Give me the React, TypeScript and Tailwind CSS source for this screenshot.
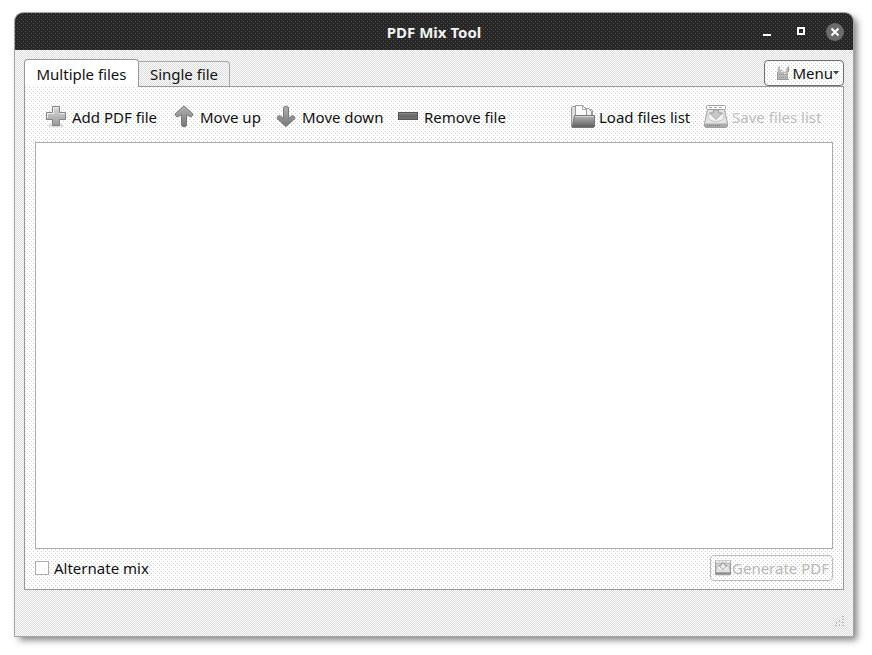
import type { ReactNode } from "react";
import { clsx } from "clsx";

const dots =
  "bg-white bg-[conic-gradient(at_1px_1px,transparent_75%,#d2d2d2_0),conic-gradient(at_1px_1px,transparent_75%,#d2d2d2_0)] bg-[length:4px_4px] bg-[position:0_0,2px_2px]";
const checker =
  "bg-[conic-gradient(#dcdcdc_25%,#fdfdfd_0_50%,#dcdcdc_0_75%,#fdfdfd_0)] bg-[length:2px_2px]";
const titleDots =
  "bg-[#262626] bg-[conic-gradient(at_1px_1px,transparent_75%,#555_0),conic-gradient(at_1px_1px,transparent_75%,#555_0)] bg-[length:4px_4px] bg-[position:0_0,2px_2px]";

function Gradients() {
  return (
    <svg className="absolute size-0" aria-hidden="true">
      <defs>
        <linearGradient id="metal" x1="0" y1="0" x2="0" y2="1">
          <stop offset="0" stopColor="#dcdcdc" />
          <stop offset="1" stopColor="#989898" />
        </linearGradient>
        <linearGradient id="arrow" x1="0" y1="0" x2="0" y2="1">
          <stop offset="0" stopColor="#b2b2b2" />
          <stop offset="1" stopColor="#777" />
        </linearGradient>
        <linearGradient id="folder" x1="0" y1="0" x2="0" y2="1">
          <stop offset="0" stopColor="#b8b8b8" />
          <stop offset="1" stopColor="#5c5c5c" />
        </linearGradient>
      </defs>
    </svg>
  );
}

function PlusIcon() {
  return (
    <svg viewBox="0 0 24 24" className="size-6 shrink-0" aria-hidden="true">
      <ellipse cx="12" cy="20.5" rx="8" ry="2" fill="#ddd" />
      <path
        d="M8.5 1.500h7v6h6v7h-6v6h-7v-6h-6v-7h6z"
        fill="url(#metal)"
        stroke="#858585"
        strokeLinejoin="round"
      />
      <path d="M9.5 8.500V2.500h5M3.500 13V8.500h6M15.500 8.500h5" fill="none" stroke="#ececec" />
    </svg>
  );
}

function ArrowIcon({ down }: { down?: boolean }) {
  return (
    <svg viewBox="0 0 24 24" className="size-6 shrink-0" aria-hidden="true">
      <path
        d={
          down
            ? "M9.500 2.500q2.500-3 5 0v11l3-2.500q2-1 3 1t-1 3L12 21.500 4.500 15q-2-1-1-3t3-1l3 2.500z"
            : "M9.500 20.500v-11l-3 2q-2 1-3-1t1-3L12 1l7.500 6.500q2 1 1 3t-3 1l-3-2v11q-2.500 3-5 0z"
        }
        fill="url(#arrow)"
        stroke="#777"
      />
    </svg>
  );
}

function MinusIcon() {
  return (
    <svg viewBox="0 0 24 24" className="size-6 shrink-0" aria-hidden="true">
      <rect x="2.500" y="7.500" width="19" height="7" fill="#707070" stroke="#555" />
      <path d="M3 8.500h18" stroke="#8a8a8a" />
      <path d="M4 11.500h16" stroke="#555" strokeDasharray="1 1" />
    </svg>
  );
}

function FolderIcon() {
  return (
    <svg viewBox="0 0 24 24" className="size-6 shrink-0" aria-hidden="true">
      <path d="M.5 22V2.500l1-1h4l1 3h14l1 1V12" fill="#dedede" stroke="#9a9a9a" />
      <path d="M10.500 12V3.500h7l3 3V12z" fill="#efefef" stroke="#999" />
      <path d="M4.500 14V.5h7l4 4V14z" fill="#fafafa" stroke="#999" />
      <path d="M11.500.5v4h4" fill="none" stroke="#aaa" />
      <path
        d="M3.500 10.500h20v11l-1 1H1z"
        fill="url(#folder)"
        stroke="#777"
      />
      <path d="M4 11.500h19" stroke="#d5d5d5" />
    </svg>
  );
}

function DriveIcon({ small }: { small?: boolean }) {
  return (
    <svg
      viewBox="0 0 24 24"
      className={clsx("shrink-0", small ? "size-4" : "size-6")}
      aria-hidden="true"
    >
      <path d="M3.500 4.500h17l3 14v3l-1 1h-21l-1-1v-3z" fill="#e4e4e4" stroke="#a0a0a0" />
      <path d="M1 18.500h22v3.500H1z" fill={small ? "#8d8d8d" : "#aaa"} />
      <path d="M3 20.500h14" stroke="#777" strokeDasharray="1 1" />
      <ellipse cx="12" cy="11.500" rx="8" ry="5" fill="#f3f3f3" stroke="#c5c5c5" />
      {small && (
        <path d="M1 1v21M23 1v21" stroke="#909090" strokeWidth="1.500" />
      )}
      <rect
        x={small ? 1 : 2.5}
        y=".5"
        width={small ? 22 : 19}
        height="4"
        rx="1"
        fill="#fff"
        stroke="#a0a0a0"
      />
      <path d="M5 2.500h14" stroke="#aaa" strokeDasharray="3 2" />
      <path
        d="M9.500 5v3h-4l6.500 6.500L18.500 8h-4V5z"
        fill={small ? "#eee" : "#c8c8c8"}
        stroke="#999"
        strokeWidth={small ? 1.5 : 0.8}
      />
    </svg>
  );
}

function MenuIcon() {
  return (
    <svg viewBox="0 0 14 16" className="h-4 w-3.5 shrink-0" aria-hidden="true">
      <path d="M1 15V7l1-1V2l2-1v4h2l2 2 2-1 1-4 2-1v3l-1 2v8z" fill="#b8b8b8" />
      <path d="M1 9.500h11M1 12.500h11" stroke="#909090" strokeDasharray="1 1" />
      <path d="M1 14.500h12M12.500 2v5M1.500 7v7" stroke="#999" />
      <path d="M5 6.500h2M8 8.500h2" stroke="#eee" />
    </svg>
  );
}

type ToolButtonProps = {
  icon: ReactNode;
  label: string;
  width: string;
  disabled?: boolean;
};

function ToolButton({ icon, label, width, disabled }: ToolButtonProps) {
  return (
    <button
      type="button"
      disabled={disabled}
      className={clsx(
        "flex h-8 shrink-0 items-center gap-1 px-2 whitespace-nowrap disabled:text-[#bdbdbd]",
        width
      )}
    >
      {icon}
      {label}
    </button>
  );
}

function TitleBar() {
  return (
    <header
      className={clsx(
        "grid h-[37px] shrink-0 grid-cols-[1fr_auto_1fr] items-center rounded-t-lg",
        titleDots
      )}
    >
      <h1 className="col-start-2 font-bold text-[#f2f2f2]">PDF Mix Tool</h1>
      <div className="flex items-center justify-end gap-4 pr-[9px]">
        <button type="button" aria-label="Minimize" className="size-[18px]">
          <svg viewBox="0 0 18 18">
            <path d="M5 12h8" stroke="#fff" strokeWidth="2" />
          </svg>
        </button>
        <button type="button" aria-label="Maximize" className="size-[18px]">
          <svg viewBox="0 0 18 18">
            <rect x="6" y="5" width="6" height="6" fill="none" stroke="#fff" strokeWidth="2" />
          </svg>
        </button>
        <button
          type="button"
          aria-label="Close"
          className="size-[18px] rounded-full bg-[#6c6c6c]"
        >
          <svg viewBox="0 0 18 18">
            <path d="M5.500 5.500l7 7M12.500 5.500l-7 7" stroke="#fff" strokeWidth="2" />
          </svg>
        </button>
      </div>
    </header>
  );
}

function TabBar() {
  return (
    <div className="flex shrink-0 items-end justify-between">
      <div role="tablist" className="z-10 -mb-px flex items-end">
        <button
          type="button"
          role="tab"
          aria-selected="true"
          className="h-7 w-[115px] rounded-t-sm border border-b-0 border-[#999] bg-white"
        >
          Multiple files
        </button>
        <button
          type="button"
          role="tab"
          aria-selected="false"
          className={clsx(
            "h-[26px] w-[91px] rounded-tr-sm border border-l-0 border-[#a8a8a8] border-b-[#999]",
            checker
          )}
        >
          Single file
        </button>
      </div>
      <button
        type="button"
        className={clsx(
          "flex h-[26px] w-20 items-center justify-end gap-0.5 rounded-sm border border-[#6e6e6e] pr-1",
          dots
        )}
      >
        <MenuIcon />
        Menu
        <svg viewBox="0 0 6 4" className="-ml-0.5 h-1 w-1.5" aria-hidden="true">
          <path d="M0 0h6L3 3.500z" fill="#444" />
        </svg>
      </button>
    </div>
  );
}

function ResizeGrip() {
  return (
    <svg viewBox="0 0 10 10" className="size-2.5" aria-hidden="true">
      <path
        d="M8 0h2v1H8zM8 3h2v1H8zM5 4h1v2H5zM8 6h2v1H8zM2 6h1v2H2zM5 8h1v2H5zM8 9h2v1H8zM1 9h2v1H1z"
        fill="#b5b5b5"
      />
    </svg>
  );
}

export default function App() {
  return (
    <div className="flex min-h-screen bg-white pt-[13px] pr-[19px] pb-[19px] pl-[15px] font-['Noto_Sans',sans-serif] text-[15px] leading-5 text-[#111]">
      <Gradients />
      <div
        className={clsx(
          "flex flex-1 flex-col rounded-t-lg shadow-[0_0_0_1px_#a5a5a5,4px_4px_7px_#00000080]",
          checker
        )}
      >
        <TitleBar />
        <main className="flex flex-1 flex-col px-[9px] pt-[9px]">
          <TabBar />
          <section
            className={clsx(
              "flex flex-1 flex-col border border-[#999] px-2.5 pt-3.5 pb-2",
              dots
            )}
          >
            <div className="flex h-8 shrink-0 items-center justify-between pr-[5px] pl-px">
              <div className="flex">
                <ToolButton icon={<PlusIcon />} label="Add PDF file" width="w-32" />
                <ToolButton icon={<ArrowIcon />} label="Move up" width="w-[102px]" />
                <ToolButton icon={<ArrowIcon down />} label="Move down" width="w-[122px]" />
                <ToolButton icon={<MinusIcon />} label="Remove file" width="w-32" />
              </div>
              <div className="flex">
                <ToolButton icon={<FolderIcon />} label="Load files list" width="w-[133px]" />
                <ToolButton icon={<DriveIcon />} label="Save files list" width="w-[132px]" disabled />
              </div>
            </div>
            <ul
              aria-label="Files"
              className="mt-[9px] flex-1 border border-[#adadad] bg-white"
            />
            <div className="mt-1.5 flex shrink-0 items-center justify-between">
              <label className="flex items-center gap-[5px]">
                <input
                  type="checkbox"
                  className="size-3.5 appearance-none border border-[#adadad] bg-white"
                />
                Alternate mix
              </label>
              <button
                type="button"
                disabled
                className={clsx(
                  "flex h-[26px] w-[123px] items-center gap-px rounded-sm border border-[#bdbdbd] pl-1 whitespace-nowrap disabled:text-[#b8b8b8]",
                  dots
                )}
              >
                <DriveIcon small />
                Generate PDF
              </button>
            </div>
          </section>
          <footer className="flex h-[46px] shrink-0 items-end justify-end pb-2.5">
            <ResizeGrip />
          </footer>
        </main>
      </div>
    </div>
  );
}
